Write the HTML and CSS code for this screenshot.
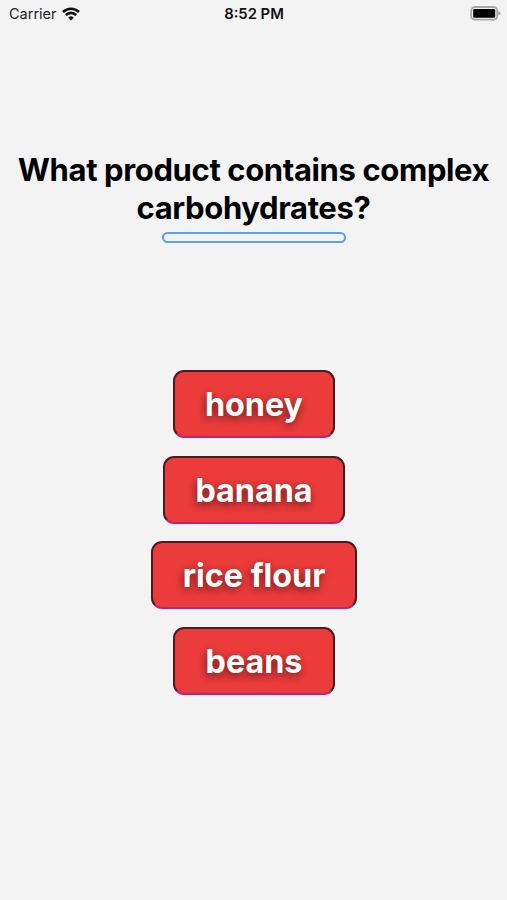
FILE: index.html
```html
<!DOCTYPE html>
<html lang="en">
<head>
  <meta charset="UTF-8" />
  <meta name="viewport" content="width=device-width, initial-scale=1.0"/>
  <title>Quiz</title>
  <link rel="stylesheet" href="styles.css">
</head>
<body>
  <header class="status-bar">
    <div class="carrier">
      <span>Carrier</span>
      <svg class="wifi" viewBox="0 0 18 14" width="18" height="14">
        <path d="M1 5 A11.5 11.5 0 0 1 17 5" />
        <path d="M3.8 8 A7.4 7.4 0 0 1 14.2 8" />
        <path class="dot" d="M9 13.6 L6.2 10.7 A4 4 0 0 1 11.8 10.7 Z" />
      </svg>
    </div>
    <div class="time">8:52 PM</div>
    <div class="battery">
      <svg viewBox="0 0 31 15" width="31" height="15">
        <rect class="shell" x="1.2" y="1" width="26" height="12.6" rx="3.5" />
        <rect class="charge" x="3.2" y="3" width="22" height="8.8" rx="1" />
        <path class="cap" d="M28.2 5 Q30.6 6 30.6 7.3 Q30.6 8.6 28.2 9.6 Z" />
      </svg>
    </div>
  </header>

  <main class="quiz">
    <h1>What product contains complex carbohydrates?</h1>
    <div class="progress"></div>
    <div class="answers">
      <button type="button" class="btn">honey</button>
      <button type="button" class="btn">banana</button>
      <button type="button" class="btn">rice flour</button>
      <button type="button" class="btn">beans</button>
    </div>
  </main>
</body>
</html>
```

FILE: styles.css
```css
* {
  box-sizing: border-box;
}

body {
  margin: 0;
  height: 900px;
  background: #f3f3f3;
  font-family: 'Inter', 'Liberation Sans', sans-serif;
  color: #000;
  overflow: hidden;
}

.status-bar {
  display: grid;
  grid-template-columns: 1fr auto 1fr;
  align-items: center;
  height: 27px;
  padding: 0 6px 0 9px;
  font-size: 14.5px;
}

.carrier {
  display: flex;
  align-items: center;
  gap: 5px;
  color: #222;
}

.wifi {
  fill: none;
  stroke: #111;
  stroke-width: 2.6;
}

.wifi .dot {
  fill: #111;
  stroke: none;
}

.time {
  margin-right: 2px;
  font-size: 14.8px;
  font-weight: 600;
  color: #111;
}

.battery {
  display: flex;
  justify-content: flex-end;
}

.shell {
  fill: none;
  stroke: #a8a8a8;
  stroke-width: 1.8;
}

.charge {
  fill: #000;
}

.cap {
  fill: #a8a8a8;
}

.quiz {
  display: flex;
  flex-direction: column;
  align-items: center;
  padding-top: 124px;
}

h1 {
  margin: 0;
  text-align: center;
  font-size: 31px;
  line-height: 38px;
  font-weight: 700;
  letter-spacing: -0.37px;
}

.progress {
  width: 184px;
  height: 11px;
  margin-top: 5px;
  border: 2px solid #5e9fec;
  border-radius: 6px;
}

.answers {
  display: flex;
  flex-direction: column;
  align-items: center;
  gap: 17.5px;
  margin-top: 127px;
  padding-left: 1px;
}

.btn {
  min-width: 162px;
  height: 68px;
  padding: 1px 30px 0;
  background: #ec3b3b;
  border: 2px solid #4a1c22;
  border-bottom-color: #bd2478;
  border-radius: 11px;
  color: #fff;
  font-family: inherit;
  font-size: 32.3px;
  font-weight: 700;
  text-shadow: -1px 3px 8px rgba(0, 0, 0, 0.55);
}
```
